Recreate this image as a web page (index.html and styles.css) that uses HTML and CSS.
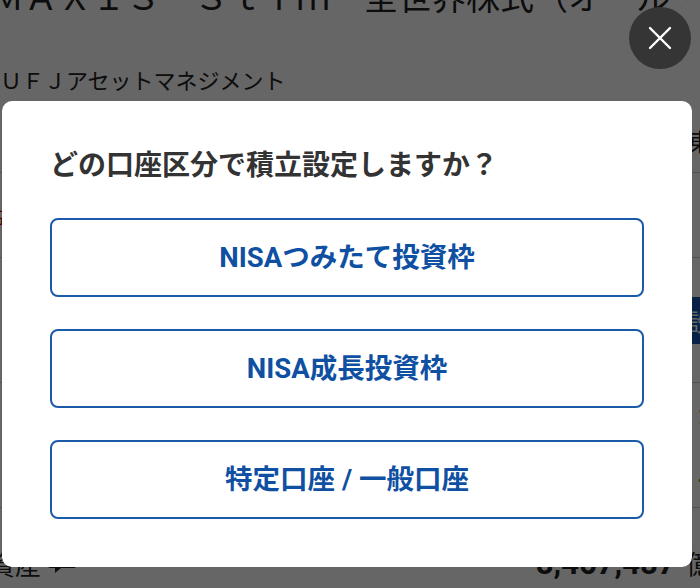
FILE: index.html
```html
<!DOCTYPE html>
<html lang="ja">
<head>
<meta charset="utf-8">
<link rel="stylesheet" href="styles.css">
</head>
<body>
<div class="page">
  <h1 class="fund-name">ｅＭＡＸＩＳ　Ｓｌｉｍ　全世界株式（オール・カントリー）</h1>
  <p class="company">三菱ＵＦＪアセットマネジメント</p>
  <div class="row row-a"><span></span><span class="r-text">東</span></div>
  <div class="row row-a2"><span class="red">損益</span><span></span></div>
  <div class="row row-b"><span></span><span class="blue-btn">設</span></div>
  <div class="row row-c"><span class="l-text">書</span><span class="r-text">2</span></div>
  <div class="row row-d"><span></span><span class="green">4</span></div>
  <div class="row row-e">
    <span class="asset">資産<svg class="bubble" width="30" height="22" viewBox="0 0 30 22"><path d="M3 2h24a2 2 0 0 1 2 2v10a2 2 0 0 1-2 2H14l-6 5v-5H3a2 2 0 0 1-2-2V4a2 2 0 0 1 2-2z" fill="#222"/></svg></span>
    <span class="total"><b>8,467,487</b> 億</span>
  </div>
</div>

<div class="overlay">
  <button class="close" aria-label="閉じる">
    <svg width="24" height="24" viewBox="0 0 24 24"><path d="M2 2L22 22M22 2L2 22" stroke="#fff" stroke-width="2.4" stroke-linecap="round"/></svg>
  </button>
  <div class="modal">
    <h2 class="modal-title">どの口座区分で積立設定しますか？</h2>
    <div class="options">
      <button class="option">NISAつみたて投資枠</button>
      <button class="option">NISA成長投資枠</button>
      <button class="option">特定口座 / 一般口座</button>
    </div>
  </div>
</div>
</body>
</html>
```

FILE: styles.css
```css
* { box-sizing: border-box; }
html, body { margin: 0; padding: 0; }
body {
  width: 700px;
  height: 588px;
  overflow: hidden;
  background: #fff;
  font-family: Roboto, "Noto Sans CJK JP", sans-serif;
  color: #333;
}
.page {
  margin-left: -44px;
  width: 756px;
}
.fund-name {
  margin: -22px 0 0;
  font-size: 34px;
  font-weight: 400;
  line-height: 40px;
  white-space: nowrap;
  color: #222;
}
.company {
  margin: 49px 0 0;
  height: 41px;
  font-size: 22px;
  line-height: 30px;
  color: #222;
}
.row {
  display: flex;
  justify-content: space-between;
  align-items: center;
  border-bottom: 1px solid #ccc;
  padding: 0 0 0 44px;
  font-size: 24px;
  color: #222;
}
.row-a { height: 65px; }
.row-a2 { height: 85px; }
.red { color: #c00; font-size: 20px; margin-left: -30px; }
.row-b { height: 125px; }
.blue-btn { background: #1356b0; color: #fff; padding: 6px 10px; font-size: 24px; margin-right: -10px; }
.row-c { height: 65px; border-bottom: none; }
.l-text { margin-left: -34px; }
.row-d { height: 60px; }
.green { color: #3c9a22; font-weight: 700; }
.row-e { height: 110px; border-bottom: none; padding-left: 0; }
.asset { display: flex; align-items: center; gap: 6px; font-size: 26px; margin-left: 33px; }
.total { font-size: 26px; }
.total b { font-size: 31px; margin-right: 4px; }

.overlay {
  position: fixed;
  inset: 0;
  background: rgba(0, 0, 0, 0.6);
}
.close {
  position: absolute;
  top: 7px;
  left: 629px;
  width: 62px;
  height: 62px;
  border-radius: 50%;
  border: none;
  background: #353535;
  display: flex;
  align-items: center;
  justify-content: center;
  padding: 0;
}
.modal {
  position: absolute;
  left: 2px;
  top: 101px;
  width: 690px;
  height: 466px;
  background: #fff;
  border-radius: 10px;
  padding: 43px 48px 48px;
}
.modal-title {
  margin: 0;
  font-family: "Noto Sans CJK JP", sans-serif;
  font-size: 28px;
  line-height: 39px;
  font-weight: 700;
  color: #333;
}
.options {
  margin-top: 35px;
  display: flex;
  flex-direction: column;
  gap: 32px;
}
.option {
  height: 79px;
  border: 2px solid #1a5aa8;
  border-radius: 8px;
  background: #fff;
  font-family: Roboto, "Noto Sans CJK JP", sans-serif;
  font-size: 27.5px;
  font-weight: 700;
  color: #0f50a2;
  padding: 0 0 6px;
}
```
